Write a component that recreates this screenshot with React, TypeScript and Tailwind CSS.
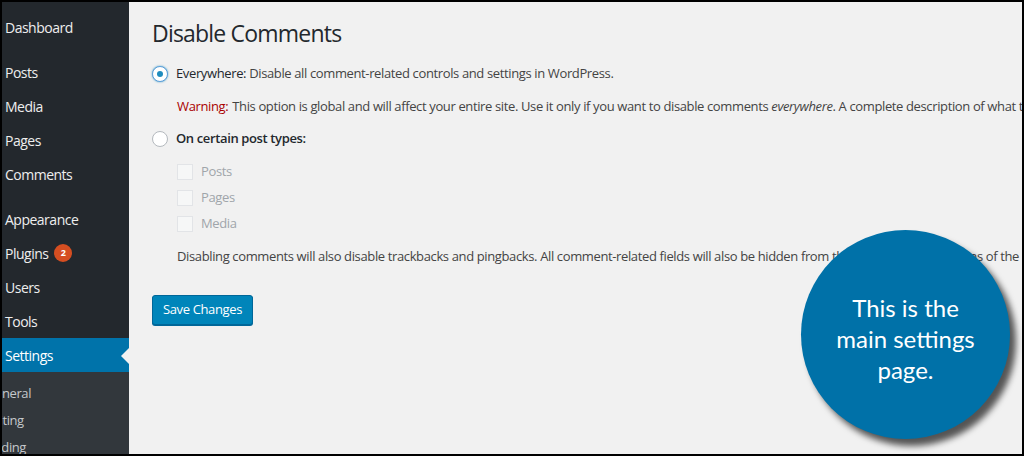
import React from 'react';

const font = { fontFamily: '"Open Sans", "Noto Sans", sans-serif' };

const MenuItem: React.FC<{ label: string; badge?: string; active?: boolean }> = ({ label, badge, active }) => (
  <div
    className={`relative flex h-[34px] items-center pl-[3px] text-[14px] tracking-[-0.5px] ${
      active ? 'bg-[#0073aa] text-white' : 'text-[#eeeeee]'
    }`}
  >
    <span>{label}</span>
    {badge && (
      <span className="ml-[6px] flex h-[18px] w-[18px] items-center justify-center rounded-full bg-[#d54e21] text-[9px] font-bold tracking-normal text-white">
        {badge}
      </span>
    )}
    {active && (
      <span className="absolute right-0 top-[10px] h-0 w-0 border-y-[8px] border-r-[8px] border-y-transparent border-r-[#f1f1f1]" />
    )}
  </div>
);

const Sidebar: React.FC = () => (
  <div className="w-[127px] shrink-0 overflow-hidden bg-[#23282d] pt-[8px]">
    <MenuItem label="Dashboard" />
    <div className="h-[11px]" />
    <MenuItem label="Posts" />
    <MenuItem label="Media" />
    <MenuItem label="Pages" />
    <MenuItem label="Comments" />
    <div className="h-[11px]" />
    <MenuItem label="Appearance" />
    <MenuItem label="Plugins" badge="2" />
    <MenuItem label="Users" />
    <MenuItem label="Tools" />
    <MenuItem label="Settings" active />
    <div className="bg-[#32373c] pt-[8px] pb-[10px] text-[13px] tracking-[-0.4px] text-[#c5c8cb]">
      <div className="flex h-[27px] items-center whitespace-nowrap">
        <span className="-ml-[16px]">General</span>
      </div>
      <div className="flex h-[27px] items-center whitespace-nowrap">
        <span className="-ml-[19px]">Writing</span>
      </div>
      <div className="flex h-[27px] items-center whitespace-nowrap">
        <span className="-ml-[22px]">Reading</span>
      </div>
    </div>
  </div>
);

const Checkbox: React.FC<{ label: string }> = ({ label }) => (
  <div className="flex h-[26px] items-center pl-[25px]">
    <span className="h-[16px] w-[16px] border border-[#e2e4e7] bg-[#f6f7f7]" />
    <span className="ml-[8px] text-[13px] text-[#a0a5aa]">{label}</span>
  </div>
);

export default function App() {
  return (
    <div className="relative h-[456px] w-[1024px] overflow-hidden border-2 border-black bg-[#f1f1f1]" style={font}>
      <div className="flex h-full">
        <Sidebar />
        <main className="flex-1 overflow-hidden whitespace-nowrap pl-[23px] pt-[17px] text-[13px] tracking-[-0.37px] text-[#444]">
          <h1 className="h-[29px] text-[23px] font-normal leading-[29px] tracking-[-0.8px] text-[#23282d]">Disable Comments</h1>

          <div className="mt-[14px] flex h-[24px] items-center">
            <span className="flex h-[16px] w-[16px] items-center justify-center rounded-full border border-[#5b9dd9] bg-white shadow-[0_0_2px_rgba(30,140,190,0.8)]">
              <span className="h-[6px] w-[6px] rounded-full bg-[#1e8cbe]" />
            </span>
            <span className="ml-[8px]">
              <span className="text-[#23282d]">Everywhere:</span> Disable all comment-related controls and settings in WordPress.
            </span>
          </div>

          <div className="mt-[9px] flex h-[24px] items-center pl-[25px]">
            <span className="text-[#a00]">Warning:</span>
            <span className="ml-[4px]">
              This option is global and will affect your entire site. Use it only if you want to disable comments <em>everywhere</em>. A complete description of what this will do is available here.
            </span>
          </div>

          <div className="mt-[8px] flex h-[24px] items-center">
            <span className="h-[16px] w-[16px] rounded-full border border-[#b4b9be] bg-white" />
            <span className="ml-[8px] font-semibold text-[#23282d]">On certain post types:</span>
          </div>

          <div className="mt-[8px]">
            <Checkbox label="Posts" />
            <Checkbox label="Pages" />
            <Checkbox label="Media" />
          </div>

          <div className="mt-[8px] flex h-[24px] items-center pl-[25px]">
            Disabling comments will also disable trackbacks and pingbacks. All comment-related fields will also be hidden from the edit/quick-edit screens of the affected posts.
          </div>

          <button className="mt-[26px] h-[30px] rounded-[3px] border border-[#006799] bg-[#0085ba] px-[10px] text-[13px] text-white shadow-[0_1px_0_#006799]">
            Save Changes
          </button>
        </main>
      </div>

      <div
        className="absolute left-[799px] top-[228px] flex h-[209px] w-[209px] flex-col items-center justify-center rounded-full bg-[#0071a8] pt-[8px] text-center text-[24px] leading-[31px] text-white shadow-[6px_7px_6px_rgba(0,0,0,0.65)]"
        style={{ fontFamily: 'Lato, "Open Sans", sans-serif' }}
      >
        <span>This is the</span>
        <span>main settings</span>
        <span>page.</span>
      </div>
    </div>
  );
}
